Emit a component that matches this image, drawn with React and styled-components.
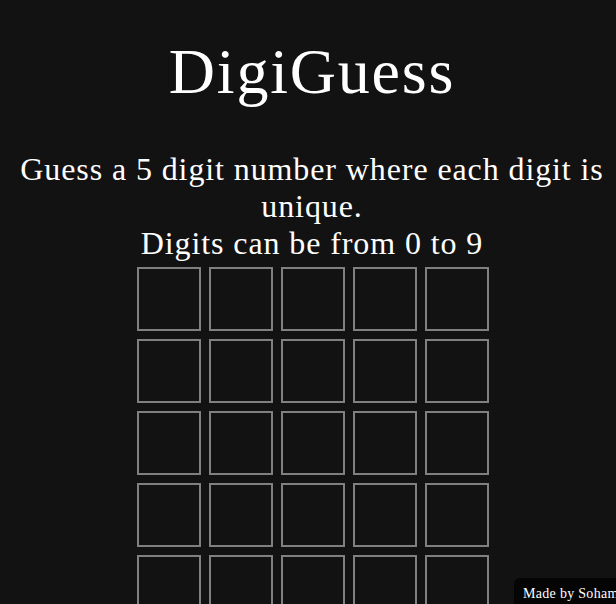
import React from "react"
import styled, { createGlobalStyle } from "styled-components"

const GlobalStyle = createGlobalStyle`
  html, body {
    margin: 0;
    padding: 0;
    background: #121212;
    overflow: hidden;
  }
  body {
    font-family: "Liberation Serif", "Times New Roman", serif;
    color: #ffffff;
  }
`

const ROWS = 6
const COLS = 5

const App = () => {
  const rows = Array.from({ length: ROWS }, (_, r) => r)
  const cols = Array.from({ length: COLS }, (_, c) => c)

  return (
    <>
      <GlobalStyle />
      <Page>
        <Title>DigiGuess</Title>
        <Subtitle>
          Guess a 5 digit number where each digit is unique.
          <br />
          Digits can be from 0 to 9
        </Subtitle>
        <Board>
          {rows.map((r) =>
            cols.map((c) => <Cell key={`${r}-${c}`} />)
          )}
        </Board>
      </Page>
      <Credit>Made by Soham</Credit>
    </>
  )
}

const Page = styled.main`
  display: flex;
  flex-direction: column;
  align-items: center;
  padding: 35px 0 0 8px;
  text-align: center;
`

const Title = styled.h1`
  margin: 0;
  font-size: 64px;
  font-weight: 400;
  line-height: normal;
  letter-spacing: 1.8px;
`

const Subtitle = styled.p`
  margin: 42px 0 0;
  font-size: 32px;
  line-height: normal;
  letter-spacing: 0.9px;
`

const Board = styled.div`
  display: grid;
  grid-template-columns: repeat(5, 64px);
  gap: 8px;
  margin: 5px 0 0 2px;
`

const Cell = styled.div`
  box-sizing: border-box;
  width: 64px;
  height: 64px;
  border: 2px solid #808080;
`

const Credit = styled.footer`
  position: fixed;
  left: 514px;
  bottom: -8px;
  padding: 8px 8px 10px 9px;
  background: #050505;
  border-top-left-radius: 6px;
  font-size: 14px;
  letter-spacing: 0.3px;
  white-space: nowrap;
`

export default App
